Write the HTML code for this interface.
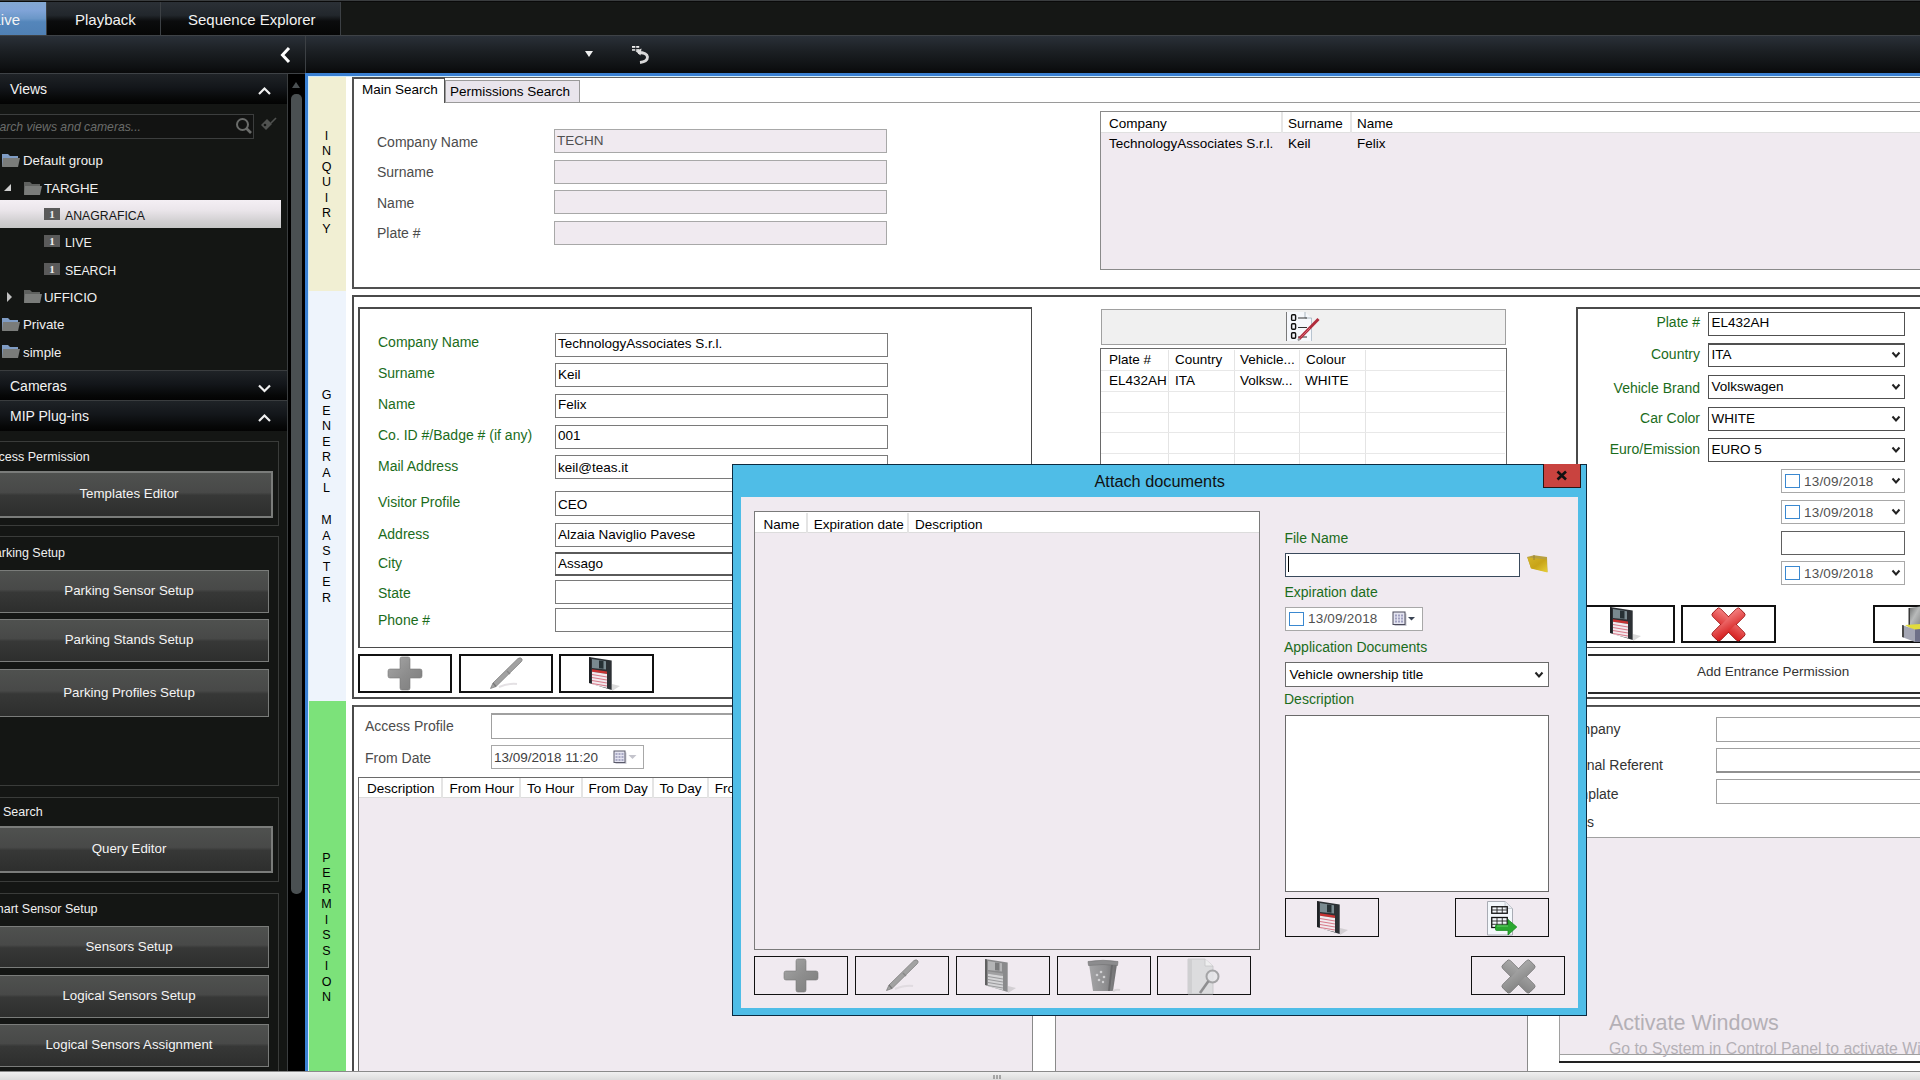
<!DOCTYPE html>
<html><head><meta charset="utf-8">
<style>
*{margin:0;padding:0;box-sizing:border-box}
html,body{width:1920px;height:1080px;overflow:hidden;background:#ffffff;font-family:"Liberation Sans",sans-serif;position:relative}
.a{position:absolute}
.t{position:absolute;white-space:nowrap;line-height:1}
svg{position:absolute;overflow:visible}
</style></head><body>

<div class="a" style="left:0px;top:0px;width:1920px;height:1px;background:#3a3d3f"></div>
<div class="a" style="left:0px;top:1px;width:1920px;height:1px;background:#0a0a0a"></div>
<div class="a" style="left:0px;top:2px;width:1920px;height:33px;background:#151715"></div>
<div class="a" style="left:0px;top:2px;width:46px;height:33px;background:linear-gradient(#84a8d2,#80a4d8 25%,#6b97c8 50%,#5486bb 60%,#5080b4)"></div>
<div class="a" style="left:47px;top:2px;width:113px;height:33px;background:linear-gradient(#2b3036,#22272c 40%,#0b0c0d 58%,#050505)"></div>
<div class="a" style="left:161px;top:2px;width:179px;height:33px;background:linear-gradient(#2b3036,#22272c 40%,#0b0c0d 58%,#050505)"></div>
<div class="a" style="left:46px;top:2px;width:1px;height:33px;background:#3c4044"></div>
<div class="a" style="left:160px;top:2px;width:1px;height:33px;background:#3c4044"></div>
<div class="a" style="left:340px;top:2px;width:1px;height:33px;background:#3c4044"></div>
<div class="t" style="left:-7.5px;top:12.30px;font-size:15px;color:#f4f4f4;">Live</div>
<div class="t" style="left:75px;top:12.30px;font-size:15px;color:#f2f2f2;">Playback</div>
<div class="t" style="left:188px;top:12.30px;font-size:15px;color:#f2f2f2;">Sequence Explorer</div>
<div class="a" style="left:0px;top:35px;width:1920px;height:1px;background:#3e4246"></div>
<div class="a" style="left:0px;top:36px;width:1920px;height:37px;background:linear-gradient(#2a3038,#1c2024 40%,#0e1012 85%,#08090a)"></div>
<div class="a" style="left:0px;top:73px;width:305px;height:1px;background:#3e4246"></div>
<div class="a" style="left:305px;top:36px;width:1px;height:37px;background:#3c4044"></div>
<svg style="left:279px;top:46px" width="14" height="18"><path d="M10 2 L3.5 9 L10 16" stroke="#fff" stroke-width="3" fill="none"/></svg>
<div class="a" style="left:585px;top:51px;width:0;height:0;border-left:4.25px solid transparent;border-right:4.25px solid transparent;border-top:6px solid #f0f0f0"></div>
<svg style="left:630px;top:44px" width="24" height="22"><g fill="#f0f0f0"><rect x="2" y="2" width="3.3" height="1.8"/><rect x="6.2" y="2" width="3" height="1.8"/><rect x="2" y="5.2" width="3.3" height="1.5"/><rect x="6.2" y="5.2" width="3" height="1.5"/></g><path d="M8 8.5 Q17 8.5 17.5 13 Q17.5 17.5 10 18.5" stroke="#d8d8d8" stroke-width="2.8" fill="none"/><path d="M5.5 7 L11.5 4.5 L10.5 11.5 Z" fill="#e0e0e0"/></svg>
<div class="a" style="left:0px;top:74px;width:288px;height:997px;background:#141614"></div>
<div class="a" style="left:288px;top:74px;width:17px;height:997px;background:#000"></div>
<div class="a" style="left:287px;top:74px;width:1px;height:997px;background:#3a3d3f"></div>
<div class="a" style="left:291px;top:94px;width:11px;height:800px;background:#4a5052;border-radius:5px"></div>
<div class="a" style="left:292px;top:82px;width:0;height:0;border-left:4.5px solid transparent;border-right:4.5px solid transparent;border-bottom:6px solid #4a5052"></div>
<div class="a" style="left:0px;top:74px;width:287px;height:30px;background:linear-gradient(#1f2327,#13161a 45%,#060707 85%,#030303)"></div>
<div class="t" style="left:10px;top:82.15px;font-size:14px;color:#f2f2f2;">Views</div>
<svg style="left:257px;top:86px" width="16" height="10"><path d="M2 8 L7.5 2.5 L13 8" stroke="#f0f0f0" stroke-width="2.2" fill="none"/></svg>
<div class="a" style="left:-2px;top:114px;width:256px;height:25px;border:1px solid #3c3e3e;background:#121312"></div>
<div class="t" style="left:-15.5px;top:120.67px;font-size:12.2px;color:#6a6c6a;font-style:italic">Search views and cameras...</div>
<svg style="left:234px;top:116px" width="20" height="20"><circle cx="8.5" cy="8.5" r="5.5" stroke="#6a6c6a" stroke-width="2" fill="none"/><path d="M12.5 12.5 L17 17" stroke="#6a6c6a" stroke-width="2.6"/></svg>
<svg style="left:259px;top:116px" width="20" height="20"><path d="M2 9 L8 3 L13 8 L7 14 Z" fill="#505250"/><circle cx="6" cy="9" r="1.3" fill="#141614"/><path d="M12 7 L17 2" stroke="#505250" stroke-width="1.6"/></svg>
<svg style="left:1px;top:153px" width="20" height="16"><path d="M1 1 H7 L9 3 H17 V13 H1 Z" fill="#7f9cc4"/><path d="M2 5 H19 L17 14 H1 Z" fill="#7a7c7a"/></svg>
<div class="t" style="left:23px;top:153.74px;font-size:13.3px;color:#f0f0f0;">Default group</div>
<div class="a" style="left:4px;top:184px;width:0;height:0;border-left:7px solid transparent;border-bottom:7px solid #d0d0d0"></div>
<svg style="left:23px;top:181px" width="20" height="16"><path d="M1 1 H7 L9 3 H17 V13 H1 Z" fill="#5f615f"/><path d="M2 5 H19 L17 14 H1 Z" fill="#7a7c7a"/></svg>
<div class="t" style="left:44px;top:181.74px;font-size:13.3px;color:#f0f0f0;">TARGHE</div>
<div class="a" style="left:0px;top:200px;width:281px;height:28px;background:linear-gradient(#f4eff4,#ebe6eb 35%,#d2d0d2 75%,#c6c6c6)"></div>
<div class="a" style="left:44px;top:208px;width:16px;height:12px;background:#5a5a5a;color:#f0f0f0;font-size:11px;font-weight:bold;text-align:center;line-height:12px;font-family:'Liberation Serif',serif">1</div>
<div class="t" style="left:65px;top:209.59px;font-size:12.3px;color:#151515;">ANAGRAFICA</div>
<div class="a" style="left:44px;top:235px;width:16px;height:12px;background:#5a5a5a;color:#f0f0f0;font-size:11px;font-weight:bold;text-align:center;line-height:12px;font-family:'Liberation Serif',serif">1</div>
<div class="t" style="left:65px;top:236.59px;font-size:12.3px;color:#f0f0f0;">LIVE</div>
<div class="a" style="left:44px;top:263px;width:16px;height:12px;background:#5a5a5a;color:#f0f0f0;font-size:11px;font-weight:bold;text-align:center;line-height:12px;font-family:'Liberation Serif',serif">1</div>
<div class="t" style="left:65px;top:264.59px;font-size:12.3px;color:#f0f0f0;">SEARCH</div>
<div class="a" style="left:7px;top:292px;width:0;height:0;border-top:5px solid transparent;border-bottom:5px solid transparent;border-left:5px solid #c0c0c0"></div>
<svg style="left:23px;top:289px" width="20" height="16"><path d="M1 1 H7 L9 3 H17 V13 H1 Z" fill="#5f615f"/><path d="M2 5 H19 L17 14 H1 Z" fill="#7a7c7a"/></svg>
<div class="t" style="left:44px;top:290.74px;font-size:13.3px;color:#f0f0f0;">UFFICIO</div>
<svg style="left:1px;top:317px" width="20" height="16"><path d="M1 1 H7 L9 3 H17 V13 H1 Z" fill="#7f9cc4"/><path d="M2 5 H19 L17 14 H1 Z" fill="#7a7c7a"/></svg>
<div class="t" style="left:23px;top:317.74px;font-size:13.3px;color:#f0f0f0;">Private</div>
<svg style="left:1px;top:344px" width="20" height="16"><path d="M1 1 H7 L9 3 H17 V13 H1 Z" fill="#7f9cc4"/><path d="M2 5 H19 L17 14 H1 Z" fill="#7a7c7a"/></svg>
<div class="t" style="left:23px;top:345.74px;font-size:13.3px;color:#f0f0f0;">simple</div>
<div class="a" style="left:0px;top:370px;width:287px;height:1px;background:#3a3d3f"></div>
<div class="a" style="left:0px;top:371px;width:287px;height:29px;background:linear-gradient(#1f2327,#13161a 45%,#060707 85%,#030303)"></div>
<div class="t" style="left:10px;top:379.15px;font-size:14px;color:#f2f2f2;">Cameras</div>
<svg style="left:257px;top:383px" width="16" height="10"><path d="M2 2.5 L7.5 8 L13 2.5" stroke="#f0f0f0" stroke-width="2.2" fill="none"/></svg>
<div class="a" style="left:0px;top:400px;width:287px;height:1px;background:#3a3d3f"></div>
<div class="a" style="left:0px;top:401px;width:287px;height:30px;background:linear-gradient(#1f2327,#13161a 45%,#060707 85%,#030303)"></div>
<div class="t" style="left:10px;top:409.15px;font-size:14px;color:#f2f2f2;">MIP Plug-ins</div>
<svg style="left:257px;top:413px" width="16" height="10"><path d="M2 8 L7.5 2.5 L13 8" stroke="#f0f0f0" stroke-width="2.2" fill="none"/></svg>
<div class="a" style="left:-4px;top:441px;width:283px;height:85px;border:1px solid #3a3c3a"></div>
<div class="t" style="left:-16px;top:451.42px;font-size:12.5px;color:#f0f0f0;">Access Permission</div>
<div class="a" style="left:-4px;top:471px;width:277px;height:47px;border:2px solid #7a7c7a;background:linear-gradient(#4f514f,#484948 45%,#373837 52%,#2d2e2d)"></div>
<div class="t" style="left:-171px;width:600px;text-align:center;top:487.24px;font-size:13.3px;color:#f4f4f4;">Templates Editor</div>
<div class="a" style="left:-4px;top:536px;width:283px;height:250px;border:1px solid #3a3c3a"></div>
<div class="t" style="left:-13.5px;top:547.42px;font-size:12.5px;color:#f0f0f0;">Parking Setup</div>
<div class="a" style="left:-4px;top:570px;width:273px;height:43px;border:1px solid #7a7c7a;background:linear-gradient(#4f514f,#484948 45%,#373837 52%,#2d2e2d)"></div>
<div class="t" style="left:-171px;width:600px;text-align:center;top:584.24px;font-size:13.3px;color:#f4f4f4;">Parking Sensor Setup</div>
<div class="a" style="left:-4px;top:619px;width:273px;height:43px;border:1px solid #7a7c7a;background:linear-gradient(#4f514f,#484948 45%,#373837 52%,#2d2e2d)"></div>
<div class="t" style="left:-171px;width:600px;text-align:center;top:633.24px;font-size:13.3px;color:#f4f4f4;">Parking Stands Setup</div>
<div class="a" style="left:-4px;top:669px;width:273px;height:48px;border:1px solid #7a7c7a;background:linear-gradient(#4f514f,#484948 45%,#373837 52%,#2d2e2d)"></div>
<div class="t" style="left:-171px;width:600px;text-align:center;top:685.74px;font-size:13.3px;color:#f4f4f4;">Parking Profiles Setup</div>
<div class="a" style="left:-4px;top:797px;width:283px;height:85px;border:1px solid #3a3c3a"></div>
<div class="t" style="left:3px;top:806.42px;font-size:12.5px;color:#f0f0f0;">Search</div>
<div class="a" style="left:-4px;top:826px;width:277px;height:47px;border:2px solid #7a7c7a;background:linear-gradient(#4f514f,#484948 45%,#373837 52%,#2d2e2d)"></div>
<div class="t" style="left:-171px;width:600px;text-align:center;top:842.24px;font-size:13.3px;color:#f4f4f4;">Query Editor</div>
<div class="a" style="left:-4px;top:893px;width:283px;height:190px;border:1px solid #3a3c3a"></div>
<div class="t" style="left:-15px;top:903.42px;font-size:12.5px;color:#f0f0f0;">Smart Sensor Setup</div>
<div class="a" style="left:-4px;top:926px;width:273px;height:42px;border:1px solid #7a7c7a;background:linear-gradient(#4f514f,#484948 45%,#373837 52%,#2d2e2d)"></div>
<div class="t" style="left:-171px;width:600px;text-align:center;top:939.74px;font-size:13.3px;color:#f4f4f4;">Sensors Setup</div>
<div class="a" style="left:-4px;top:975px;width:273px;height:43px;border:1px solid #7a7c7a;background:linear-gradient(#4f514f,#484948 45%,#373837 52%,#2d2e2d)"></div>
<div class="t" style="left:-171px;width:600px;text-align:center;top:989.24px;font-size:13.3px;color:#f4f4f4;">Logical Sensors Setup</div>
<div class="a" style="left:-4px;top:1024px;width:273px;height:43px;border:1px solid #7a7c7a;background:linear-gradient(#4f514f,#484948 45%,#373837 52%,#2d2e2d)"></div>
<div class="t" style="left:-171px;width:600px;text-align:center;top:1038.24px;font-size:13.3px;color:#f4f4f4;">Logical Sensors Assignment</div>
<div class="a" style="left:305px;top:73px;width:1615px;height:3px;background:#3a80d2"></div>
<div class="a" style="left:305px;top:73px;width:3px;height:998px;background:#3a80d2"></div>
<div class="a" style="left:308px;top:76px;width:1612px;height:995px;background:#fff"></div>
<div class="a" style="left:308px;top:76px;width:38px;height:215px;background:#f1efd3"></div>
<div class="a" style="left:308px;top:291px;width:38px;height:410px;background:#eef4fc"></div>
<div class="a" style="left:308px;top:701px;width:38px;height:370px;background:#7ce27a"></div>
<div class="t" style="left:316px;width:21px;text-align:center;top:129.92px;font-size:12.5px;color:#000">I</div>
<div class="t" style="left:316px;width:21px;text-align:center;top:145.42px;font-size:12.5px;color:#000">N</div>
<div class="t" style="left:316px;width:21px;text-align:center;top:160.92px;font-size:12.5px;color:#000">Q</div>
<div class="t" style="left:316px;width:21px;text-align:center;top:176.42px;font-size:12.5px;color:#000">U</div>
<div class="t" style="left:316px;width:21px;text-align:center;top:191.92px;font-size:12.5px;color:#000">I</div>
<div class="t" style="left:316px;width:21px;text-align:center;top:207.42px;font-size:12.5px;color:#000">R</div>
<div class="t" style="left:316px;width:21px;text-align:center;top:222.92px;font-size:12.5px;color:#000">Y</div>
<div class="t" style="left:316px;width:21px;text-align:center;top:389.42px;font-size:12.5px;color:#000">G</div>
<div class="t" style="left:316px;width:21px;text-align:center;top:404.92px;font-size:12.5px;color:#000">E</div>
<div class="t" style="left:316px;width:21px;text-align:center;top:420.42px;font-size:12.5px;color:#000">N</div>
<div class="t" style="left:316px;width:21px;text-align:center;top:435.92px;font-size:12.5px;color:#000">E</div>
<div class="t" style="left:316px;width:21px;text-align:center;top:451.42px;font-size:12.5px;color:#000">R</div>
<div class="t" style="left:316px;width:21px;text-align:center;top:466.92px;font-size:12.5px;color:#000">A</div>
<div class="t" style="left:316px;width:21px;text-align:center;top:482.42px;font-size:12.5px;color:#000">L</div>
<div class="t" style="left:316px;width:21px;text-align:center;top:514.42px;font-size:12.5px;color:#000">M</div>
<div class="t" style="left:316px;width:21px;text-align:center;top:529.92px;font-size:12.5px;color:#000">A</div>
<div class="t" style="left:316px;width:21px;text-align:center;top:545.42px;font-size:12.5px;color:#000">S</div>
<div class="t" style="left:316px;width:21px;text-align:center;top:560.92px;font-size:12.5px;color:#000">T</div>
<div class="t" style="left:316px;width:21px;text-align:center;top:576.42px;font-size:12.5px;color:#000">E</div>
<div class="t" style="left:316px;width:21px;text-align:center;top:591.92px;font-size:12.5px;color:#000">R</div>
<div class="t" style="left:316px;width:21px;text-align:center;top:851.92px;font-size:12.5px;color:#000">P</div>
<div class="t" style="left:316px;width:21px;text-align:center;top:867.42px;font-size:12.5px;color:#000">E</div>
<div class="t" style="left:316px;width:21px;text-align:center;top:882.92px;font-size:12.5px;color:#000">R</div>
<div class="t" style="left:316px;width:21px;text-align:center;top:898.42px;font-size:12.5px;color:#000">M</div>
<div class="t" style="left:316px;width:21px;text-align:center;top:913.92px;font-size:12.5px;color:#000">I</div>
<div class="t" style="left:316px;width:21px;text-align:center;top:929.42px;font-size:12.5px;color:#000">S</div>
<div class="t" style="left:316px;width:21px;text-align:center;top:944.92px;font-size:12.5px;color:#000">S</div>
<div class="t" style="left:316px;width:21px;text-align:center;top:960.42px;font-size:12.5px;color:#000">I</div>
<div class="t" style="left:316px;width:21px;text-align:center;top:975.92px;font-size:12.5px;color:#000">O</div>
<div class="t" style="left:316px;width:21px;text-align:center;top:991.42px;font-size:12.5px;color:#000">N</div>
<div class="a" style="left:308px;top:76px;width:1612px;height:1px;background:#d4eefc"></div>
<div class="a" style="left:308px;top:76px;width:1px;height:995px;background:#d4eefc"></div>
<div class="a" style="left:352px;top:77px;width:1568px;height:1px;background:#606060"></div>
<div class="a" style="left:352px;top:77px;width:2px;height:211px;background:#505050"></div>
<div class="a" style="left:352px;top:77px;width:93px;height:2px;background:#505050"></div>
<div class="a" style="left:444px;top:79px;width:1px;height:24px;background:#505050"></div>
<div class="a" style="left:445px;top:80px;width:135px;height:23px;background:#e9e5ec;border:1px solid #9a9a9a;border-bottom:none"></div>
<div class="a" style="left:445px;top:102px;width:1475px;height:1px;background:#9a9a9a"></div>
<div class="a" style="left:352px;top:287px;width:1568px;height:2px;background:#505050"></div>
<div class="t" style="left:362px;top:83.07px;font-size:13.5px;color:#000;">Main Search</div>
<div class="t" style="left:450px;top:84.57px;font-size:13.5px;color:#000;">Permissions Search</div>
<div class="t" style="left:377px;top:134.65px;font-size:14px;color:#4c4c4c;">Company Name</div>
<div class="t" style="left:377px;top:165.15px;font-size:14px;color:#4c4c4c;">Surname</div>
<div class="t" style="left:377px;top:195.65px;font-size:14px;color:#4c4c4c;">Name</div>
<div class="t" style="left:377px;top:226.45px;font-size:14px;color:#4c4c4c;">Plate #</div>
<div class="a" style="left:554px;top:129px;width:333px;height:24px;background:#f0eaf0;border:1px solid #a8a8a8"></div>
<div class="a" style="left:554px;top:160px;width:333px;height:24px;background:#f0eaf0;border:1px solid #a8a8a8"></div>
<div class="a" style="left:554px;top:190px;width:333px;height:24px;background:#f0eaf0;border:1px solid #a8a8a8"></div>
<div class="a" style="left:554px;top:221px;width:333px;height:24px;background:#f0eaf0;border:1px solid #a8a8a8"></div>
<div class="t" style="left:557px;top:134.37px;font-size:13.5px;color:#505050;">TECHN</div>
<div class="a" style="left:1100px;top:111px;width:820px;height:159px;background:#f0eaf0;border:1px solid #8a8a8a;border-right:none"></div>
<div class="a" style="left:1101px;top:112px;width:819px;height:21px;background:#fff;border-bottom:1px solid #e0e0e0"></div>
<div class="a" style="left:1281px;top:112px;width:2px;height:21px;background:#e6e6e6"></div>
<div class="a" style="left:1350px;top:112px;width:2px;height:21px;background:#e6e6e6"></div>
<div class="t" style="left:1109px;top:116.57px;font-size:13.5px;color:#000;">Company</div>
<div class="t" style="left:1288px;top:116.57px;font-size:13.5px;color:#000;">Surname</div>
<div class="t" style="left:1357px;top:116.57px;font-size:13.5px;color:#000;">Name</div>
<div class="t" style="left:1109px;top:137.07px;font-size:13.5px;color:#000;">TechnologyAssociates S.r.l.</div>
<div class="t" style="left:1288px;top:137.07px;font-size:13.5px;color:#000;">Keil</div>
<div class="t" style="left:1357px;top:137.07px;font-size:13.5px;color:#000;">Felix</div>
<div class="a" style="left:352px;top:295px;width:1568px;height:2px;background:#4a4a4a"></div>
<div class="a" style="left:352px;top:295px;width:2px;height:403px;background:#4a4a4a"></div>
<div class="a" style="left:352px;top:697px;width:1568px;height:2px;background:#4a4a4a"></div>
<div class="a" style="left:358px;top:307px;width:674px;height:341px;border:2px solid #4a4a4a;border-right-width:1px;border-bottom-width:1px"></div>
<div class="t" style="left:378px;top:334.85px;font-size:14px;color:#1b6c1b;">Company Name</div>
<div class="t" style="left:378px;top:366.45px;font-size:14px;color:#1b6c1b;">Surname</div>
<div class="t" style="left:378px;top:396.85px;font-size:14px;color:#1b6c1b;">Name</div>
<div class="t" style="left:378px;top:427.85px;font-size:14px;color:#1b6c1b;">Co. ID #/Badge # (if any)</div>
<div class="t" style="left:378px;top:459.15px;font-size:14px;color:#1b6c1b;">Mail Address</div>
<div class="t" style="left:378px;top:494.85px;font-size:14px;color:#1b6c1b;">Visitor Profile</div>
<div class="t" style="left:378px;top:527.15px;font-size:14px;color:#1b6c1b;">Address</div>
<div class="t" style="left:378px;top:556.15px;font-size:14px;color:#1b6c1b;">City</div>
<div class="t" style="left:378px;top:586.15px;font-size:14px;color:#1b6c1b;">State</div>
<div class="t" style="left:378px;top:612.95px;font-size:14px;color:#1b6c1b;">Phone #</div>
<div class="a" style="left:555px;top:333px;width:333px;height:24px;background:#fff;border:1px solid #7a7a7a"></div>
<div class="t" style="left:558px;top:336.57px;font-size:13.5px;color:#000;">TechnologyAssociates S.r.l.</div>
<div class="a" style="left:555px;top:363px;width:333px;height:24px;background:#fff;border:1px solid #7a7a7a"></div>
<div class="t" style="left:558px;top:368.27px;font-size:13.5px;color:#000;">Keil</div>
<div class="a" style="left:555px;top:394px;width:333px;height:24px;background:#fff;border:1px solid #7a7a7a"></div>
<div class="t" style="left:558px;top:398.27px;font-size:13.5px;color:#000;">Felix</div>
<div class="a" style="left:555px;top:425px;width:333px;height:24px;background:#fff;border:1px solid #7a7a7a"></div>
<div class="t" style="left:558px;top:428.87px;font-size:13.5px;color:#000;">001</div>
<div class="a" style="left:555px;top:455px;width:333px;height:24px;background:#fff;border:1px solid #7a7a7a"></div>
<div class="t" style="left:558px;top:460.57px;font-size:13.5px;color:#000;">keil@teas.it</div>
<div class="a" style="left:555px;top:491px;width:333px;height:25px;background:#fff;border:1px solid #7a7a7a"></div>
<div class="t" style="left:558px;top:497.57px;font-size:13.5px;color:#000;">CEO</div>
<div class="a" style="left:555px;top:523px;width:333px;height:24px;background:#fff;border:1px solid #7a7a7a"></div>
<div class="t" style="left:558px;top:527.57px;font-size:13.5px;color:#000;">Alzaia Naviglio Pavese</div>
<div class="a" style="left:555px;top:552px;width:333px;height:24px;background:#fff;border:1px solid #7a7a7a"></div>
<div class="t" style="left:558px;top:556.57px;font-size:13.5px;color:#000;">Assago</div>
<div class="a" style="left:555px;top:580px;width:333px;height:24px;background:#fff;border:1px solid #7a7a7a"></div>
<div class="a" style="left:555px;top:608px;width:333px;height:24px;background:#fff;border:1px solid #7a7a7a"></div>
<div class="a" style="left:555px;top:552px;width:333px;height:2px;background:#5a5a5a"></div>
<div class="a" style="left:555px;top:574px;width:333px;height:2px;background:#5a5a5a"></div>
<div class="a" style="left:358px;top:654px;width:94px;height:39px;border:2px solid #111"></div>
<div class="a" style="left:459px;top:654px;width:94px;height:39px;border:2px solid #111"></div>
<div class="a" style="left:559px;top:654px;width:95px;height:39px;border:2px solid #111"></div>
<svg style="left:388px;top:656.5px" width="34" height="34"><defs><linearGradient id="pg405673" x1="0" y1="0" x2="1" y2="1"><stop offset="0" stop-color="#a8a8a8"/><stop offset="0.5" stop-color="#8e8e8e"/><stop offset="1" stop-color="#7c7c7c"/></linearGradient></defs><path d="M14 0 H20 Q22 0 22 2 V12 H32 Q34 12 34 14 V19 Q34 21 32 21 H22 V31 Q22 33 20 33 H14 Q12 33 12 31 V21 H2 Q0 21 0 19 V14 Q0 12 2 12 H12 V2 Q12 0 14 0 Z" fill="url(#pg405673)" stroke="#7a7a7a" stroke-width="0.6"/></svg>
<svg style="left:489px;top:656px" width="36" height="36"><path d="M1.5 32.5 L4 27 L29 2.5 Q31.5 1 33 3 Q33.5 4.5 32 6 L7 30.5 Z" fill="#a2a2a2" stroke="#808080" stroke-width="0.8"/><path d="M4 27 L7 30.5" stroke="#777" stroke-width="1.2"/><path d="M18 15 L21 18" stroke="#888" stroke-width="1.5"/><path d="M10 31 Q20 27 28 28" stroke="#d8d4d8" stroke-width="2" fill="none" opacity="0.7"/></svg>
<svg style="left:589px;top:657px" width="34" height="36"><path d="M23 27 L31 29 L23 34 Z" fill="#b0b0b0" opacity="0.45"/><path d="M0 0 L22.7 3.4 L22.7 33 L0 26 Z" fill="#2c3034"/><path d="M3 2 L17 4.2 L17 12.5 L3 11 Z" fill="#7a8a90"/><path d="M10 3.4 L14.5 4 L14.5 11.8 L10 11.3 Z" fill="#263034"/><path d="M3 12.2 L18 14.5 L18 17 L3 14.8 Z" fill="#c83232"/><path d="M3 14.8 L18 17 L18 31 L3 27.6 Z" fill="#f2eaee"/><path d="M3 17.5 L18 20 M3 20.5 L18 23 M3 23.5 L18 26 M3 26.5 L18 29" stroke="#d87a8a" stroke-width="1.1"/><path d="M0 0 L2 0.3 L2 26.6 L0 26 Z" fill="#000" opacity="0.3"/></svg>
<div class="a" style="left:1101px;top:309px;width:405px;height:36px;background:#f0f0f0;border:1px solid #a0a0a0"></div>
<svg style="left:1286px;top:311px" width="36" height="32"><path d="M0.5 1 H19 L25.5 7 V30 H0.5" fill="#f6f8fc"/><path d="M0.5 1 V30" stroke="#7a7a7a" stroke-width="1"/><path d="M25.5 7 V30" stroke="#b8c4d0" stroke-width="1"/><path d="M19 1 V7 H25.5" fill="none" stroke="#9aa4b0" stroke-width="0.8"/><g fill="none" stroke="#111" stroke-width="1.4"><rect x="5.6" y="3.8" width="4" height="5.6" rx="1"/><rect x="5.6" y="12.8" width="4" height="5.4" rx="1"/><rect x="5.6" y="21.8" width="4" height="5.4" rx="1"/></g><path d="M12 7 H21 M12 16.5 H21 M12 26 H21" stroke="#333" stroke-width="1"/><path d="M13 28 L32.5 8" stroke="#b02c3c" stroke-width="3"/><path d="M14.5 26.5 L24 17" stroke="#e07080" stroke-width="0.8"/><path d="M12 29.5 L14 27.5" stroke="#999" stroke-width="2.2"/></svg>
<div class="a" style="left:1100px;top:348px;width:407px;height:700px;background:#fff;border:1px solid #6a6a6a"></div>
<div class="a" style="left:1101px;top:350px;width:404px;height:20px;background:#fff"></div>
<div class="a" style="left:1168px;top:350px;width:1px;height:700px;background:#e4e4e4"></div>
<div class="a" style="left:1234px;top:350px;width:1px;height:700px;background:#e4e4e4"></div>
<div class="a" style="left:1299px;top:350px;width:1px;height:700px;background:#e4e4e4"></div>
<div class="a" style="left:1365px;top:350px;width:1px;height:700px;background:#e4e4e4"></div>
<div class="a" style="left:1101px;top:370px;width:404px;height:1px;background:#e8e8e8"></div>
<div class="a" style="left:1101px;top:391px;width:404px;height:1px;background:#e8e8e8"></div>
<div class="a" style="left:1101px;top:412px;width:404px;height:1px;background:#e8e8e8"></div>
<div class="a" style="left:1101px;top:432px;width:404px;height:1px;background:#e8e8e8"></div>
<div class="a" style="left:1101px;top:453px;width:404px;height:1px;background:#e8e8e8"></div>
<div class="t" style="left:1109px;top:353.27px;font-size:13.5px;color:#000;">Plate #</div>
<div class="t" style="left:1175px;top:353.27px;font-size:13.5px;color:#000;">Country</div>
<div class="t" style="left:1240px;top:353.27px;font-size:13.5px;color:#000;">Vehicle...</div>
<div class="t" style="left:1306px;top:353.27px;font-size:13.5px;color:#000;">Colour</div>
<div class="t" style="left:1109px;top:374.37px;font-size:13.5px;color:#000;">EL432AH</div>
<div class="t" style="left:1175px;top:374.37px;font-size:13.5px;color:#000;">ITA</div>
<div class="t" style="left:1240px;top:374.37px;font-size:13.5px;color:#000;">Volksw...</div>
<div class="t" style="left:1305px;top:374.37px;font-size:13.5px;color:#000;">WHITE</div>
<div class="a" style="left:1576px;top:307px;width:344px;height:341px;border:2px solid #4a4a4a;border-right:none;border-bottom-width:1px"></div>
<div class="t" style="right:220px;top:315.05px;font-size:14px;color:#1b6c1b;">Plate #</div>
<div class="t" style="right:220px;top:346.95px;font-size:14px;color:#1b6c1b;">Country</div>
<div class="t" style="right:220px;top:380.75px;font-size:14px;color:#1b6c1b;">Vehicle Brand</div>
<div class="t" style="right:220px;top:411.15px;font-size:14px;color:#1b6c1b;">Car Color</div>
<div class="t" style="right:220px;top:442.15px;font-size:14px;color:#1b6c1b;">Euro/Emission</div>
<div class="a" style="left:1708px;top:312px;width:197px;height:24px;background:#fff;border:1px solid #505050"></div>
<div class="t" style="left:1711.5px;top:316.37px;font-size:13.5px;color:#000;">EL432AH</div>
<div class="a" style="left:1708px;top:343px;width:197px;height:24px;background:#fff;border:1px solid #505050"></div>
<div class="t" style="left:1711.5px;top:348.27px;font-size:13.5px;color:#000;">ITA</div>
<svg style="left:1891px;top:351px" width="10" height="8"><path d="M1.5 1.5 L5 5.5 L8.5 1.5" stroke="#222" stroke-width="2" fill="none"/></svg>
<div class="a" style="left:1708px;top:375px;width:197px;height:24px;background:#fff;border:1px solid #505050"></div>
<div class="t" style="left:1711.5px;top:380.17px;font-size:13.5px;color:#000;">Volkswagen</div>
<svg style="left:1891px;top:383px" width="10" height="8"><path d="M1.5 1.5 L5 5.5 L8.5 1.5" stroke="#222" stroke-width="2" fill="none"/></svg>
<div class="a" style="left:1708px;top:407px;width:197px;height:24px;background:#fff;border:1px solid #505050"></div>
<div class="t" style="left:1711.5px;top:411.57px;font-size:13.5px;color:#000;">WHITE</div>
<svg style="left:1891px;top:415px" width="10" height="8"><path d="M1.5 1.5 L5 5.5 L8.5 1.5" stroke="#222" stroke-width="2" fill="none"/></svg>
<div class="a" style="left:1708px;top:438px;width:197px;height:24px;background:#fff;border:1px solid #505050"></div>
<div class="t" style="left:1711.5px;top:443.07px;font-size:13.5px;color:#000;">EURO 5</div>
<svg style="left:1891px;top:446px" width="10" height="8"><path d="M1.5 1.5 L5 5.5 L8.5 1.5" stroke="#222" stroke-width="2" fill="none"/></svg>
<div class="a" style="left:1708px;top:343px;width:197px;height:2px;background:#505050"></div>
<div class="a" style="left:1781px;top:469px;width:124px;height:24px;background:#fff;border:1px solid #a8a8a8"></div>
<div class="a" style="left:1785px;top:474px;width:15px;height:14px;border:1.5px solid #3a88d0;background:#fff"></div>
<div class="t" style="left:1804px;top:474.57px;font-size:13.5px;color:#505050;letter-spacing:0.2px">13/09/2018</div>
<svg style="left:1891px;top:477px" width="10" height="8"><path d="M1.5 1.5 L5 5.5 L8.5 1.5" stroke="#222" stroke-width="2" fill="none"/></svg>
<div class="a" style="left:1781px;top:500px;width:124px;height:24px;background:#fff;border:1px solid #a8a8a8"></div>
<div class="a" style="left:1785px;top:505px;width:15px;height:14px;border:1.5px solid #3a88d0;background:#fff"></div>
<div class="t" style="left:1804px;top:505.57px;font-size:13.5px;color:#505050;letter-spacing:0.2px">13/09/2018</div>
<svg style="left:1891px;top:508px" width="10" height="8"><path d="M1.5 1.5 L5 5.5 L8.5 1.5" stroke="#222" stroke-width="2" fill="none"/></svg>
<div class="a" style="left:1781px;top:561px;width:124px;height:24px;background:#fff;border:1px solid #a8a8a8"></div>
<div class="a" style="left:1785px;top:566px;width:15px;height:14px;border:1.5px solid #3a88d0;background:#fff"></div>
<div class="t" style="left:1804px;top:566.57px;font-size:13.5px;color:#505050;letter-spacing:0.2px">13/09/2018</div>
<svg style="left:1891px;top:569px" width="10" height="8"><path d="M1.5 1.5 L5 5.5 L8.5 1.5" stroke="#222" stroke-width="2" fill="none"/></svg>
<div class="a" style="left:1781px;top:531px;width:124px;height:24px;background:#fff;border:1px solid #606060"></div>
<div class="a" style="left:1580px;top:605px;width:95px;height:38px;border:2px solid #111"></div>
<svg style="left:1610px;top:607px" width="34" height="36"><path d="M23 27 L31 29 L23 34 Z" fill="#b0b0b0" opacity="0.45"/><path d="M0 0 L22.7 3.4 L22.7 33 L0 26 Z" fill="#2c3034"/><path d="M3 2 L17 4.2 L17 12.5 L3 11 Z" fill="#7a8a90"/><path d="M10 3.4 L14.5 4 L14.5 11.8 L10 11.3 Z" fill="#263034"/><path d="M3 12.2 L18 14.5 L18 17 L3 14.8 Z" fill="#c83232"/><path d="M3 14.8 L18 17 L18 31 L3 27.6 Z" fill="#f2eaee"/><path d="M3 17.5 L18 20 M3 20.5 L18 23 M3 23.5 L18 26 M3 26.5 L18 29" stroke="#d87a8a" stroke-width="1.1"/><path d="M0 0 L2 0.3 L2 26.6 L0 26 Z" fill="#000" opacity="0.3"/></svg>
<div class="a" style="left:1681px;top:605px;width:95px;height:38px;border:2px solid #111"></div>
<svg style="left:1711px;top:607px" width="36" height="36"><defs><linearGradient id="xg1711607" x1="0" y1="0" x2="1" y2="1"><stop offset="0" stop-color="#f48080"/><stop offset="1" stop-color="#d41c1c"/></linearGradient></defs><g transform="rotate(45 17.5 17.5)" fill="url(#xg1711607)" stroke="#9a1010" stroke-width="0.9"><rect x="-1.75" y="12" width="38.5" height="11" rx="2.5"/><rect x="12" y="-1.75" width="11" height="38.5" rx="2.5"/></g><g transform="rotate(45 17.5 17.5)" fill="url(#xg1711607)"><rect x="-1.1" y="12.6" width="37.2" height="9.8" rx="2"/><rect x="12.6" y="-1.1" width="9.8" height="37.2" rx="2"/></g></svg>
<div class="a" style="left:1873px;top:605px;width:60px;height:38px;border:2px solid #111"></div>
<svg style="left:1900px;top:605px" width="24" height="40"><defs><linearGradient id="cab" x1="0" y1="0" x2="1" y2="1"><stop offset="0" stop-color="#6a6c6c"/><stop offset="0.5" stop-color="#b8baba"/><stop offset="1" stop-color="#8a8c8c"/></linearGradient></defs><path d="M9 3 L20 1.5 L20 21 L9 21 Z" fill="url(#cab)"/><path d="M8.5 3 L10 3 L10 21 L8.5 21 Z" fill="#3a3a3a"/><path d="M5 20 L20 19 L20 25 L14 25.5 Z" fill="#e2dc3c"/><path d="M2 20 L15 24.5 L15 37 L2 32 Z" fill="#a4a6b4"/><path d="M2 20 L4 20.5 L4 32.5 L2 32 Z" fill="#4a4a4a"/><path d="M15 24.5 L20 24 L20 37 L15 37 Z" fill="#6e7088"/></svg>
<div class="a" style="left:1588px;top:654px;width:332px;height:2px;background:#2a2a2a"></div>
<div class="t" style="left:1697px;top:665.27px;font-size:13.5px;color:#333;">Add Entrance Permission</div>
<div class="a" style="left:1588px;top:692px;width:332px;height:2px;background:#2a2a2a"></div>
<div class="a" style="left:352px;top:705px;width:1568px;height:2px;background:#5a5a5a"></div>
<div class="a" style="left:352px;top:705px;width:2px;height:366px;background:#4a4a4a"></div>
<div class="t" style="left:365px;top:718.95px;font-size:14px;color:#4c4c4c;">Access Profile</div>
<div class="t" style="left:365px;top:751.15px;font-size:14px;color:#4c4c4c;">From Date</div>
<div class="a" style="left:491px;top:713px;width:560px;height:26px;background:#fff;border:1px solid #a0a0a0"></div>
<div class="a" style="left:491px;top:713px;width:560px;height:2px;background:#a0a0a0"></div>
<div class="a" style="left:491px;top:745px;width:153px;height:24px;background:#fff;border:1px solid #a8a8a8"></div>
<div class="t" style="left:494px;top:750.57px;font-size:13.5px;color:#404040;">13/09/2018 11:20</div>
<svg style="left:613px;top:750px" width="26" height="16"><rect x="2.5" y="2.5" width="11" height="11.5" fill="#d0d0d8"/><rect x="1" y="1" width="11" height="11.5" fill="#e4e4f0" stroke="#5a5a6a" stroke-width="1"/><g fill="#a8a8c4"><rect x="2.5" y="3" width="2" height="2"/><rect x="5.5" y="3" width="2" height="2"/><rect x="8.5" y="3" width="2" height="2"/><rect x="2.5" y="6" width="2" height="2"/><rect x="5.5" y="6" width="2" height="2"/><rect x="8.5" y="6" width="2" height="2"/><rect x="2.5" y="9" width="2" height="2"/><rect x="5.5" y="9" width="2" height="2"/><rect x="8.5" y="9" width="2" height="2"/></g><path d="M15.5 5 H23.5 L19.5 9 Z" fill="#c4c4cc"/></svg>
<div class="a" style="left:358px;top:777px;width:675px;height:310px;background:#f0eaf0;border:1px solid #6a6a6a"></div>
<div class="a" style="left:359px;top:778px;width:673px;height:20px;background:#fff;border-bottom:1px solid #dcdcdc"></div>
<div class="a" style="left:441px;top:778px;width:2px;height:20px;background:#e4e4e4"></div>
<div class="a" style="left:519px;top:778px;width:2px;height:20px;background:#e4e4e4"></div>
<div class="a" style="left:581px;top:778px;width:2px;height:20px;background:#e4e4e4"></div>
<div class="a" style="left:652px;top:778px;width:2px;height:20px;background:#e4e4e4"></div>
<div class="a" style="left:707px;top:778px;width:2px;height:20px;background:#e4e4e4"></div>
<div class="t" style="left:367px;top:781.57px;font-size:13.5px;color:#000;">Description</div>
<div class="t" style="left:449.5px;top:781.57px;font-size:13.5px;color:#000;">From Hour</div>
<div class="t" style="left:527px;top:781.57px;font-size:13.5px;color:#000;">To Hour</div>
<div class="t" style="left:588.5px;top:781.57px;font-size:13.5px;color:#000;">From Day</div>
<div class="t" style="left:659.6px;top:781.57px;font-size:13.5px;color:#000;">To Day</div>
<div class="t" style="left:714.7px;top:781.57px;font-size:13.5px;color:#000;">From</div>
<div class="a" style="left:1032px;top:705px;width:1px;height:366px;background:#8a8a8a"></div>
<div class="a" style="left:1055px;top:705px;width:1px;height:366px;background:#8a8a8a"></div>
<div class="a" style="left:1056px;top:707px;width:472px;height:364px;background:#f0eaf0"></div>
<div class="a" style="left:1527px;top:705px;width:1px;height:366px;background:#8a8a8a"></div>
<div class="a" style="left:1559px;top:705px;width:361px;height:1px;background:#4a4a4a"></div>
<div class="t" style="right:299.5px;top:721.85px;font-size:14px;color:#333;">Company</div>
<div class="t" style="right:257px;top:757.75px;font-size:14px;color:#333;">Internal Referent</div>
<div class="t" style="right:301.5px;top:787.15px;font-size:14px;color:#333;">Template</div>
<div class="t" style="right:326px;top:815.15px;font-size:14px;color:#333;">Notes</div>
<div class="a" style="left:1716px;top:717px;width:210px;height:25px;background:#fff;border:1px solid #a0a0a0"></div>
<div class="a" style="left:1716px;top:748px;width:210px;height:25px;background:#fff;border:1px solid #a0a0a0"></div>
<div class="a" style="left:1716px;top:771px;width:210px;height:2px;background:#909090"></div>
<div class="a" style="left:1716px;top:779px;width:210px;height:25px;background:#fff;border:1px solid #a0a0a0"></div>
<div class="a" style="left:1559px;top:837px;width:361px;height:1px;background:#a0a0a0"></div>
<div class="a" style="left:1559px;top:838px;width:361px;height:216px;background:#f0eaf0"></div>
<div class="a" style="left:1559px;top:1054px;width:361px;height:1px;background:#a0a0a0"></div>
<div class="a" style="left:1559px;top:1061px;width:361px;height:2px;background:#222"></div>
<div class="a" style="left:1559px;top:837px;width:1px;height:224px;background:#a0a0a0"></div>
<div class="t" style="left:1609px;top:1012.80px;font-size:21.5px;color:#b4b0b6;">Activate Windows</div>
<div class="t" style="left:1609px;top:1040.63px;font-size:15.8px;color:#b4b0b6;">Go to System in Control Panel to activate Windows.</div>
<div class="a" style="left:0px;top:1071px;width:1920px;height:1px;background:#8a8a8a"></div>
<div class="a" style="left:0px;top:1072px;width:1920px;height:8px;background:linear-gradient(#f0f0f0,#dcdcdc)"></div>
<svg style="left:993px;top:1074px" width="10" height="6"><path d="M1 5 V1 M4 5 V1 M7 5 V1" stroke="#666" stroke-width="1"/></svg>
<div class="a" style="left:732px;top:464px;width:855px;height:552px;background:#4fbde7;border:1px solid #0c2a40"></div>
<div class="a" style="left:741px;top:497px;width:837px;height:511px;background:#f0eaf0"></div>
<div class="t" style="left:1094.5px;top:473.20px;font-size:16.3px;color:#111;">Attach documents</div>
<div class="a" style="left:1543px;top:464px;width:38px;height:24px;background:#c9433f;border:1px solid #2a1515;border-top:none"></div>
<svg style="left:1556px;top:470px" width="12" height="11"><path d="M1.5 1.5 L10 9.5 M10 1.5 L1.5 9.5" stroke="#111" stroke-width="2.6"/></svg>
<div class="a" style="left:754px;top:511px;width:506px;height:439px;background:#f0eaf0;border:1px solid #7a7a7a"></div>
<div class="a" style="left:755px;top:512px;width:504px;height:21px;background:#fff;border-bottom:1px solid #dcdcdc"></div>
<div class="a" style="left:806px;top:513px;width:2px;height:20px;background:#e4e4e4"></div>
<div class="a" style="left:907px;top:513px;width:2px;height:20px;background:#e4e4e4"></div>
<div class="t" style="left:763.5px;top:517.57px;font-size:13.5px;color:#000;">Name</div>
<div class="t" style="left:813.7px;top:517.57px;font-size:13.5px;color:#000;">Expiration date</div>
<div class="t" style="left:915px;top:517.57px;font-size:13.5px;color:#000;">Description</div>
<div class="t" style="left:1284.4px;top:530.95px;font-size:14px;color:#1b6c1b;">File Name</div>
<div class="a" style="left:1285px;top:553px;width:235px;height:24px;background:#fff;border:1px solid #3a4a5c"></div>
<div class="a" style="left:1288px;top:556px;width:1px;height:16px;background:#000"></div>
<svg style="left:1526px;top:554px" width="24" height="22"><defs><linearGradient id="fld" x1="0" y1="0" x2="1" y2="1"><stop offset="0" stop-color="#d4b428"/><stop offset="0.5" stop-color="#c8a418"/><stop offset="1" stop-color="#e8d038"/></linearGradient></defs><path d="M1 3 L8 1.2 L21 3 L21.5 18 L5 14 Z" fill="#b8a040"/><path d="M1.5 3.5 L20.5 5.5 L21.5 18.5 L5 14.5 Z" fill="url(#fld)"/><path d="M8 1 V6" stroke="#8a7a40" stroke-width="0.8"/></svg>
<div class="t" style="left:1284.4px;top:584.85px;font-size:14px;color:#1b6c1b;">Expiration date</div>
<div class="a" style="left:1285px;top:607px;width:138px;height:24px;background:#fff;border:1px solid #a8a8a8"></div>
<div class="a" style="left:1289px;top:612px;width:15px;height:14px;border:1.5px solid #3a88d0;background:#fff"></div>
<div class="t" style="left:1308px;top:611.87px;font-size:13.5px;color:#505050;letter-spacing:0.2px">13/09/2018</div>
<svg style="left:1392px;top:611px" width="26" height="18"><rect x="2.5" y="2.5" width="12" height="12.5" fill="#c8c8d0"/><rect x="1" y="1" width="12" height="12.5" fill="#e4e4f0" stroke="#4a4a5a" stroke-width="1"/><g fill="#a0a0c0"><rect x="3" y="3.5" width="2" height="2"/><rect x="6" y="3.5" width="2" height="2"/><rect x="9" y="3.5" width="2" height="2"/><rect x="3" y="6.5" width="2" height="2"/><rect x="6" y="6.5" width="2" height="2"/><rect x="9" y="6.5" width="2" height="2"/><rect x="3" y="9.5" width="2" height="2"/><rect x="6" y="9.5" width="2" height="2"/><rect x="9" y="9.5" width="2" height="2"/></g><path d="M16 6 H23 L19.5 9.5 Z" fill="#3a4454"/></svg>
<div class="t" style="left:1284px;top:639.65px;font-size:14px;color:#1b6c1b;">Application Documents</div>
<div class="a" style="left:1285px;top:662px;width:264px;height:25px;background:#fff;border:1px solid #6a6a6a"></div>
<div class="t" style="left:1289.6px;top:667.87px;font-size:13.5px;color:#000;">Vehicle ownership title</div>
<svg style="left:1534px;top:671px" width="10" height="8"><path d="M1.5 1.5 L5 5.5 L8.5 1.5" stroke="#222" stroke-width="2" fill="none"/></svg>
<div class="t" style="left:1284px;top:692.45px;font-size:14px;color:#1b6c1b;">Description</div>
<div class="a" style="left:1285px;top:715px;width:264px;height:177px;background:#fff;border:1px solid #6a6a6a"></div>
<div class="a" style="left:1285px;top:898px;width:94px;height:39px;border:1.5px solid #111"></div>
<svg style="left:1317px;top:901px" width="34" height="36"><path d="M23 27 L31 29 L23 34 Z" fill="#b0b0b0" opacity="0.45"/><path d="M0 0 L22.7 3.4 L22.7 33 L0 26 Z" fill="#2c3034"/><path d="M3 2 L17 4.2 L17 12.5 L3 11 Z" fill="#7a8a90"/><path d="M10 3.4 L14.5 4 L14.5 11.8 L10 11.3 Z" fill="#263034"/><path d="M3 12.2 L18 14.5 L18 17 L3 14.8 Z" fill="#c83232"/><path d="M3 14.8 L18 17 L18 31 L3 27.6 Z" fill="#f2eaee"/><path d="M3 17.5 L18 20 M3 20.5 L18 23 M3 23.5 L18 26 M3 26.5 L18 29" stroke="#d87a8a" stroke-width="1.1"/><path d="M0 0 L2 0.3 L2 26.6 L0 26 Z" fill="#000" opacity="0.3"/></svg>
<div class="a" style="left:1455px;top:898px;width:94px;height:39px;border:1.5px solid #111"></div>
<svg style="left:1487px;top:900px" width="32" height="37"><path d="M0.5 1.5 H18 L25.5 8.5 V35 H0.5 Z" fill="#f4f8fc" stroke="#a8acb4" stroke-width="1"/><path d="M18 1.5 V8.5 H25.5" fill="#e8ecf0" stroke="#c0c4cc" stroke-width="0.8"/><g stroke="#111" stroke-width="1.3" fill="none"><rect x="4.75" y="6.75" width="15.5" height="6.5"/><rect x="4.75" y="17.5" width="15.5" height="10"/></g><g stroke="#222" stroke-width="0.9" fill="none"><path d="M10 6.75 V13.25 M15.25 6.75 V13.25 M4.75 10 H20.25"/><path d="M10 17.5 V27.5 M15.25 17.5 V27.5 M4.75 21 H20.25 M4.75 24.3 H20.25"/></g><path d="M9.5 25 H21 V19.5 L29.8 27 L21 35 V30.4 H9.5 Q8.5 30.4 8.5 29.4 V26 Q8.5 25 9.5 25 Z" fill="#2aa830" stroke="#188a1e" stroke-width="0.8"/><path d="M10 26 H21" stroke="#6ad070" stroke-width="1"/></svg>
<div class="a" style="left:754px;top:956px;width:94px;height:39px;border:1.5px solid #111"></div>
<div class="a" style="left:855px;top:956px;width:94px;height:39px;border:1.5px solid #111"></div>
<div class="a" style="left:956px;top:956px;width:94px;height:39px;border:1.5px solid #111"></div>
<div class="a" style="left:1057px;top:956px;width:94px;height:39px;border:1.5px solid #111"></div>
<div class="a" style="left:1157px;top:956px;width:94px;height:39px;border:1.5px solid #111"></div>
<svg style="left:784px;top:958.5px" width="34" height="34"><defs><linearGradient id="pg801975" x1="0" y1="0" x2="1" y2="1"><stop offset="0" stop-color="#a8a8a8"/><stop offset="0.5" stop-color="#8e8e8e"/><stop offset="1" stop-color="#7c7c7c"/></linearGradient></defs><path d="M14 0 H20 Q22 0 22 2 V12 H32 Q34 12 34 14 V19 Q34 21 32 21 H22 V31 Q22 33 20 33 H14 Q12 33 12 31 V21 H2 Q0 21 0 19 V14 Q0 12 2 12 H12 V2 Q12 0 14 0 Z" fill="url(#pg801975)" stroke="#7a7a7a" stroke-width="0.6"/></svg>
<svg style="left:885px;top:958px" width="36" height="36"><path d="M1.5 32.5 L4 27 L29 2.5 Q31.5 1 33 3 Q33.5 4.5 32 6 L7 30.5 Z" fill="#a2a2a2" stroke="#808080" stroke-width="0.8"/><path d="M4 27 L7 30.5" stroke="#777" stroke-width="1.2"/><path d="M18 15 L21 18" stroke="#888" stroke-width="1.5"/><path d="M10 31 Q20 27 28 28" stroke="#d8d4d8" stroke-width="2" fill="none" opacity="0.7"/></svg>
<svg style="left:985px;top:959px" width="34" height="36"><path d="M23 27 L31 29 L23 34 Z" fill="#b0b0b0" opacity="0.45"/><path d="M0 0 L22.7 3.4 L22.7 33 L0 26 Z" fill="#8a8a8c"/><path d="M3 2 L17 4.2 L17 12.5 L3 11 Z" fill="#b4b4b6"/><path d="M10 3.4 L14.5 4 L14.5 11.8 L10 11.3 Z" fill="#7a7a7c"/><path d="M3 12.2 L18 14.5 L18 17 L3 14.8 Z" fill="#a0a0a2"/><path d="M3 14.8 L18 17 L18 31 L3 27.6 Z" fill="#d4d4d6"/><path d="M3 17.5 L18 20 M3 20.5 L18 23 M3 23.5 L18 26 M3 26.5 L18 29" stroke="#9a9a9c" stroke-width="1.1"/><path d="M0 0 L2 0.3 L2 26.6 L0 26 Z" fill="#000" opacity="0.3"/></svg>
<svg style="left:1087px;top:959px" width="32" height="34"><defs><linearGradient id="trg" x1="0" y1="0" x2="1" y2="0"><stop offset="0" stop-color="#a4a4a6"/><stop offset="0.6" stop-color="#8e8e90"/><stop offset="1" stop-color="#6e6e70"/></linearGradient></defs><path d="M2 5 H30 L26 32 H6 Z" fill="url(#trg)"/><path d="M1 2.5 Q16 0 31 2.5 L30.5 6.5 Q16 4.5 1.5 6.5 Z" fill="#8c8c8e" stroke="#707072" stroke-width="0.6"/><path d="M25 6 L22 32" stroke="#6a6a6c" stroke-width="2"/><g fill="#d0d0d2"><circle cx="10" cy="16" r="1.3"/><circle cx="14" cy="13" r="1.3"/><circle cx="17" cy="18" r="1.3"/><circle cx="12" cy="21" r="1.3"/><circle cx="16" cy="23" r="1.2"/></g><path d="M26 32 Q30 30 33 31" stroke="#d8d4d8" stroke-width="2" fill="none"/></svg>
<svg style="left:1187px;top:958px" width="34" height="37"><path d="M1 1 H18 L26 8 V36 H1 Z" fill="#dcdcde" stroke="#c4c4c6" stroke-width="0.8"/><path d="M18 1 V8 H26" fill="#eeeeef" stroke="#c4c4c6" stroke-width="0.8"/><path d="M1 1 H5 V36 H1 Z" fill="#cfcfd1"/><circle cx="25.5" cy="18.5" r="6" fill="#e6e6e8" fill-opacity="0.8" stroke="#a4a4a6" stroke-width="2"/><path d="M21.5 23 L13 35" stroke="#8e8e90" stroke-width="2.6"/></svg>
<div class="a" style="left:1471px;top:956px;width:94px;height:39px;border:1.5px solid #111"></div>
<svg style="left:1501px;top:959px" width="36" height="36"><defs><linearGradient id="xg1501959" x1="0" y1="0" x2="1" y2="1"><stop offset="0" stop-color="#a8a8a8"/><stop offset="1" stop-color="#858585"/></linearGradient></defs><g transform="rotate(45 17.5 17.5)" fill="url(#xg1501959)" stroke="#7a7a7a" stroke-width="0.9"><rect x="-1.75" y="12" width="38.5" height="11" rx="2.5"/><rect x="12" y="-1.75" width="11" height="38.5" rx="2.5"/></g><g transform="rotate(45 17.5 17.5)" fill="url(#xg1501959)"><rect x="-1.1" y="12.6" width="37.2" height="9.8" rx="2"/><rect x="12.6" y="-1.1" width="9.8" height="37.2" rx="2"/></g></svg>
</body></html>
